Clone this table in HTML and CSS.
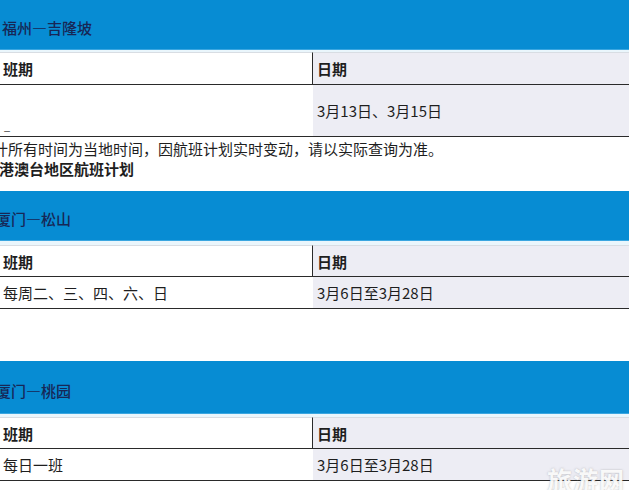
FILE: index.html
```html
<!DOCTYPE html>
<html lang="zh">
<head>
<meta charset="utf-8">
<title>航班计划</title>
<link rel="stylesheet" href="styles.css">
</head>
<body>
<div class="page">
  <section class="route route-first">
    <div class="route-title">福州<span class="dash">—</span>吉隆坡</div>
    <div class="band-gap"></div>
    <div class="grid">
      <div class="cell head">班期</div>
      <div class="cell head alt">日期</div>
      <div class="cell tall"><span class="mark">_</span></div>
      <div class="cell tall alt">3月13日、3月15日</div>
    </div>
  </section>
  <div class="notes">
    <p class="note"><span class="clip">计</span>所有时间为当地时间，因航班计划实时变动，请以实际查询为准。</p>
    <p class="subhead"><span class="clip-s">港</span>澳台地区航班计划</p>
  </div>

  <section class="route route-second">
    <div class="route-title cut"><span class="clip-t">厦</span>门<span class="dash">—</span>松山</div>
    <div class="band-gap"></div>
    <div class="grid">
      <div class="cell head">班期</div>
      <div class="cell head alt">日期</div>
      <div class="cell">每周二、三、四、六、日</div>
      <div class="cell alt">3月6日至3月28日</div>
    </div>
  </section>

  <section class="route route-third">
    <div class="route-title cut tall-band"><span class="clip-t">厦</span>门<span class="dash">—</span>桃园</div>
    <div class="band-gap"></div>
    <div class="grid">
      <div class="cell head">班期</div>
      <div class="cell head alt">日期</div>
      <div class="cell">每日一班</div>
      <div class="cell alt">3月6日至3月28日</div>
    </div>
  </section>

  <div class="watermark">旅游网</div>
</div>
</body>
</html>
```

FILE: styles.css
```css
* { box-sizing: border-box; }
html, body {
  margin: 0;
  padding: 0;
  background: #ffffff;
  overflow: hidden;
}
.page {
  position: relative;
  width: 629px;
  height: 490px;
  overflow: hidden;
  font-family: "Noto Sans CJK SC", "Noto Sans", sans-serif;
  font-size: 15px;
  color: #1e1e1e;
}
.route { display: flex; flex-direction: column; }
.route-title {
  height: 50px;
  background: #078cd3;
  color: #172756;
  font-size: 15px;
  font-weight: 500;
  line-height: 20px;
  padding: 18px 0 0 2px;
  border-bottom: 1px solid #3aa6e0;
  white-space: nowrap;
}
.route-title.cut { padding-left: 0; }
.route-title.tall-band { height: 53px; padding-top: 20px; }
.dash {
  font-feature-settings: "fwid" 1;
}
.band-gap { height: 2px; background: #eaf6fc; }
.route-second .band-gap { height: 4px; }
.route-third .band-gap { height: 3px; }
.grid {
  display: grid;
  grid-template-columns: 313px 1fr;
}
.cell {
  height: 32px;
  line-height: 31px;
  padding-left: 3px;
  border-bottom: 1px solid #2a2a2a;
  white-space: nowrap;
  background: #ffffff;
}
.cell.alt {
  background: #ededf4;
  padding-left: 4px;
}
.cell.head {
  font-weight: bold;
  height: 33px;
  line-height: 32px;
  border-top: 1px solid #d8dde3;
}
.route-second .cell.head, .route-third .cell.head { height: 32px; }
.cell.head:first-child { border-right: 1px solid #2a2a2a; }
.cell.tall {
  height: 52px;
  line-height: 51px;
  position: relative;
}
.mark {
  position: absolute;
  left: 4px;
  top: 30px;
  line-height: 20px;
  font-size: 11px;
  color: #333;
}
.notes { padding-top: 2px; }
.note, .subhead {
  margin: 0;
  line-height: 20px;
  white-space: nowrap;
}
.subhead { font-weight: bold; }
.clip, .clip-s, .clip-t {
  display: inline-block;
  overflow: hidden;
  direction: rtl;
  vertical-align: top;
}
.clip { width: 8px; }
.clip-s { width: 14px; }
.clip-t { width: 11px; }
.route-second { margin-top: 12px; }
.route-third { margin-top: 52px; }
.watermark {
  position: absolute;
  right: 4px;
  bottom: -7px;
  font-size: 25px;
  font-weight: bold;
  letter-spacing: 1px;
  color: rgba(255, 255, 255, 0.92);
  text-shadow: 0 0 2px rgba(120, 120, 120, 0.5);
}
```
